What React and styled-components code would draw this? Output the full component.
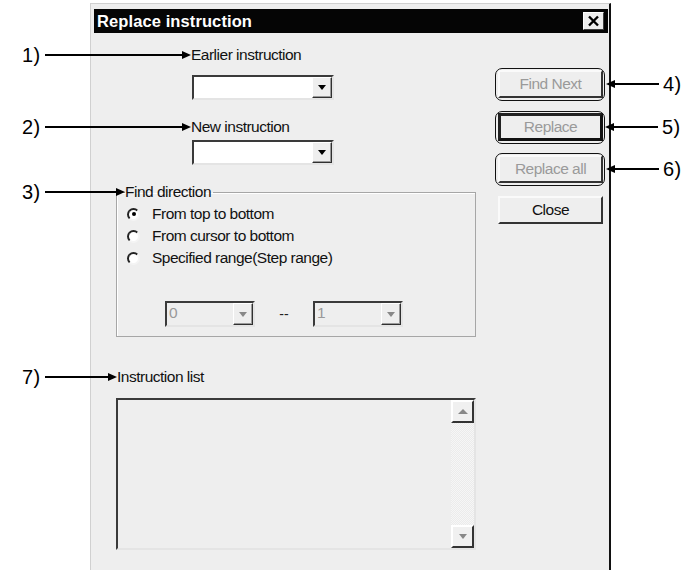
import React from "react";
import styled, { createGlobalStyle } from "styled-components";

const GlobalStyle = createGlobalStyle`
  html, body {
    margin: 0;
    background: #fff;
  }
  body {
    font-family: "Liberation Sans", Arial, sans-serif;
    color: #111;
  }
`;

const Page = styled.div`
  width: 692px;
  height: 570px;
  overflow: hidden;
  box-sizing: border-box;
  padding: 3px 0 0 90px;
`;

const Dialog = styled.div`
  position: relative;
  width: 521px;
  height: 590px;
  box-sizing: border-box;
  background: #eeeeee;
  border-left: 1px solid #d0d0d0;
  border-top: 1px solid #d0d0d0;
  border-right: 2px solid #111;
  padding: 5px 1px 0 3px;
`;

const TitleBar = styled.div`
  display: flex;
  align-items: center;
  justify-content: space-between;
  height: 24px;
  background: #050505;
  padding: 0 4px 0 3px;
`;

const Title = styled.span`
  color: #fff;
  font-weight: bold;
  font-size: 16.5px;
  letter-spacing: 0.1px;
`;

const CloseBox = styled.span`
  display: flex;
  align-items: center;
  justify-content: center;
  width: 21px;
  height: 18px;
  box-sizing: border-box;
  background: #eeeeee;
  border: 1px solid;
  border-color: #fff #404040 #404040 #fff;
`;

const Body = styled.div`
  display: flex;
  justify-content: space-between;
`;

const LeftCol = styled.div`
  display: flex;
  flex-direction: column;
  padding-left: 22px;
  width: 360px;
`;

const RightCol = styled.div`
  display: flex;
  flex-direction: column;
  width: 105px;
  margin-right: 5px;
  padding-top: 37px;
`;

const Label = styled.div`
  position: relative;
  align-self: flex-start;
  margin-left: ${(p) => p.$indent || 0}px;
  margin-top: ${(p) => p.$top || 0}px;
  font-size: 15.5px;
  line-height: 16px;
  letter-spacing: -0.5px;
`;

const Callout = styled.span`
  position: absolute;
  right: 100%;
  top: 50%;
  transform: translateY(-50%);
  width: ${(p) => p.$w}px;
  display: flex;
  align-items: center;
  z-index: 2;
`;

const RightCallout = styled.span`
  position: absolute;
  left: calc(100% + 5px);
  top: 50%;
  transform: translateY(-50%);
  display: flex;
  align-items: center;
  z-index: 2;
`;

const Num = styled.span`
  font-size: 20px;
  line-height: 18px;
  letter-spacing: 0.5px;
  color: #000;
  margin: ${(p) => (p.$right ? "0 0 0 4px" : "0 4px 0 0")};
`;

const Line = styled.span`
  flex: ${(p) => (p.$w ? "none" : 1)};
  width: ${(p) => (p.$w ? `${p.$w}px` : "auto")};
  height: 2px;
  background: #000;
`;

const HeadRight = styled.span`
  width: 0;
  height: 0;
  border-top: 4px solid transparent;
  border-bottom: 4px solid transparent;
  border-left: 9px solid #000;
`;

const HeadLeft = styled.span`
  width: 0;
  height: 0;
  border-top: 4px solid transparent;
  border-bottom: 4px solid transparent;
  border-right: 9px solid #000;
`;

const Combo = styled.div`
  display: flex;
  width: ${(p) => p.$w}px;
  height: ${(p) => p.$h || 25}px;
  box-sizing: border-box;
  margin-left: ${(p) => p.$indent || 0}px;
  margin-top: ${(p) => p.$top || 0}px;
  background: ${(p) => (p.$disabled ? "#eeeeee" : "#fff")};
  border: 2px solid;
  border-color: #3a3a3a #e4e4e4 #e4e4e4 #3a3a3a;
`;

const ComboValue = styled.span`
  flex: 1;
  padding-left: 2px;
  font-size: 15.5px;
  line-height: 20px;
  color: #999;
`;

const DropButton = styled.span`
  display: flex;
  align-items: center;
  justify-content: center;
  width: 20px;
  box-sizing: border-box;
  background: #eeeeee;
  border: 1px solid;
  border-color: #fff #303030 #303030 #fff;
  box-shadow: inset -1px -1px 0 #9a9a9a;
`;

const DownTri = styled.span`
  width: 0;
  height: 0;
  border-left: 4.5px solid transparent;
  border-right: 4.5px solid transparent;
  border-top: 5px solid ${(p) => (p.$disabled ? "#888" : "#000")};
`;

const UpTri = styled.span`
  width: 0;
  height: 0;
  border-left: 5px solid transparent;
  border-right: 5px solid transparent;
  border-bottom: 5px solid #888;
`;

const Group = styled.fieldset`
  margin: 19px 0 0 0;
  padding: 3px 0 9px 10px;
  width: 360px;
  min-width: 0;
  box-sizing: border-box;
  border: 1px solid #a6a6a6;
  box-shadow: inset 1px 1px 0 #fff;
`;

const Legend = styled.legend`
  position: relative;
  margin-left: -2px;
  padding: 0 2px 0 0;
  font-size: 15.5px;
  line-height: 16px;
  letter-spacing: -0.5px;
`;

const RadioRow = styled.label`
  display: flex;
  align-items: center;
  height: 22px;
  font-size: 15.5px;
  letter-spacing: -0.5px;
`;

const RadioDot = styled.span`
  position: relative;
  width: 13px;
  height: 13px;
  box-sizing: border-box;
  border-radius: 50%;
  background: #fff;
  border: 2px solid;
  border-color: #222 #f4f4f4 #f4f4f4 #222;
  margin-right: 12px;

  &::after {
    content: "";
    display: ${(p) => (p.$checked ? "block" : "none")};
    position: absolute;
    left: 2.5px;
    top: 2.5px;
    width: 4px;
    height: 4px;
    border-radius: 50%;
    background: #000;
  }
`;

const RangeRow = styled.div`
  display: flex;
  align-items: center;
  margin: 32px 0 0 38px;
`;

const Dash = styled.span`
  width: 58px;
  text-align: center;
  font-size: 14px;
  color: #222;
`;

const ListBox = styled.div`
  display: flex;
  justify-content: flex-end;
  margin-top: 13px;
  width: 360px;
  height: 152px;
  box-sizing: border-box;
  border: 2px solid;
  border-color: #3a3a3a #e4e4e4 #e4e4e4 #3a3a3a;
`;

const ScrollBar = styled.div`
  display: flex;
  flex-direction: column;
  justify-content: space-between;
  width: 23px;
  background: repeating-conic-gradient(#f6f6f6 0 25%, #ebebeb 0 50%) 0 0 / 2px 2px;
`;

const ScrollButton = styled.span`
  display: flex;
  align-items: center;
  justify-content: center;
  height: 23px;
  box-sizing: border-box;
  background: #f0f0f0;
  border: 2px solid;
  border-color: #fff #333 #333 #fff;
`;

const Button = styled.div`
  position: relative;
  display: flex;
  align-items: center;
  justify-content: center;
  height: 28px;
  margin-top: ${(p) => p.$top || 0}px;
  box-sizing: border-box;
  font-size: 15.5px;
  letter-spacing: -0.5px;
  color: ${(p) => (p.$disabled ? "#9a9a9a" : "#111")};
  background: #eeeeee;
  border: ${(p) => (p.$default ? "3px" : "2px")} solid;
  border-color: ${(p) =>
    p.$default ? "#222 #111 #111 #222" : "#fafafa #333 #333 #fafafa"};

  &::before {
    content: "";
    display: ${(p) => (p.$marked ? "block" : "none")};
    position: absolute;
    left: ${(p) => (p.$default ? -6 : -5)}px;
    right: ${(p) => (p.$default ? -5 : -4)}px;
    top: ${(p) => (p.$default ? -5 : -4)}px;
    bottom: ${(p) => (p.$default ? -6 : -5)}px;
    border: 1.5px solid #111;
    border-radius: 7px;
  }
`;

function LeftArrow({ n, w }) {
  return (
    <Callout $w={w}>
      <Num>{n}</Num>
      <Line />
      <HeadRight />
    </Callout>
  );
}

function RightArrow({ n }) {
  return (
    <RightCallout>
      <HeadLeft />
      <Line $w={44} />
      <Num $right>{n}</Num>
    </RightCallout>
  );
}

function ComboBox({ w, value, disabled, indent, top, h }) {
  return (
    <Combo $w={w} $disabled={disabled} $indent={indent} $top={top} $h={h}>
      <ComboValue>{value}</ComboValue>
      <DropButton>
        <DownTri $disabled={disabled} />
      </DropButton>
    </Combo>
  );
}

const directions = [
  { label: "From top to bottom", checked: true },
  { label: "From cursor to bottom" },
  { label: "Specified range(Step range)" },
];

export default function App() {
  return (
    <>
      <GlobalStyle />
      <Page>
        <Dialog>
          <TitleBar>
            <Title>Replace instruction</Title>
            <CloseBox>
              <svg width="13" height="12" viewBox="0 0 13 12">
                <path d="M2 1.5 L11 10.5 M11 1.5 L2 10.5" stroke="#000" strokeWidth="2.4" />
              </svg>
            </CloseBox>
          </TitleBar>
          <Body>
            <LeftCol>
              <Label $indent={75} $top={14}>
                <LeftArrow n="1)" w={169} />
                Earlier instruction
              </Label>
              <ComboBox w={142} indent={76} top={12} />
              <Label $indent={75} $top={19}>
                <LeftArrow n="2)" w={169} />
                New instruction
              </Label>
              <ComboBox w={142} indent={76} top={5} />
              <Group>
                <Legend>
                  <LeftArrow n="3)" w={103} />
                  Find direction
                </Legend>
                {directions.map(({ label, checked }) => (
                  <RadioRow key={label}>
                    <RadioDot $checked={checked} />
                    {label}
                  </RadioRow>
                ))}
                <RangeRow>
                  <ComboBox w={90} h={26} value="0" disabled />
                  <Dash>--</Dash>
                  <ComboBox w={90} h={26} value="1" disabled />
                </RangeRow>
              </Group>
              <Label $indent={1} $top={32}>
                <LeftArrow n="7)" w={95} />
                Instruction list
              </Label>
              <ListBox>
                <ScrollBar>
                  <ScrollButton>
                    <UpTri />
                  </ScrollButton>
                  <ScrollButton>
                    <DownTri $disabled />
                  </ScrollButton>
                </ScrollBar>
              </ListBox>
            </LeftCol>
            <RightCol>
              <Button $disabled $marked>
                Find Next
                <RightArrow n="4)" />
              </Button>
              <Button $disabled $marked $default $top={15}>
                Replace
                <RightArrow n="5)" />
              </Button>
              <Button $disabled $marked $top={14}>
                Replace all
                <RightArrow n="6)" />
              </Button>
              <Button $top={13}>Close</Button>
            </RightCol>
          </Body>
        </Dialog>
      </Page>
    </>
  );
}
